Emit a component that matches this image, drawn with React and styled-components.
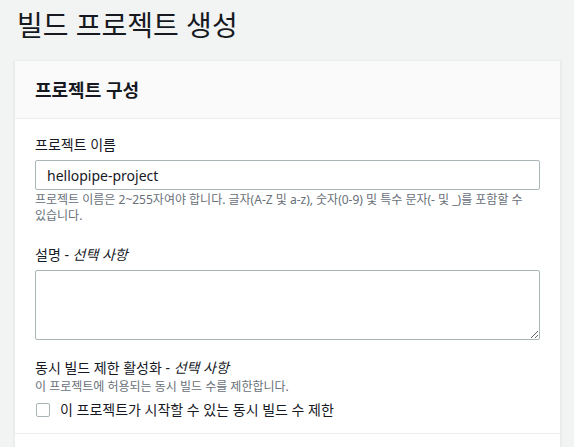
import React from "react";
import styled, { createGlobalStyle } from "styled-components";

const GlobalStyle = createGlobalStyle`
  html, body {
    margin: 0;
    padding: 0;
    background: #f2f3f3;
  }
  body {
    font-family: "Noto Sans", "Noto Sans CJK KR", sans-serif;
    color: #16191f;
  }
`;

const Page = styled.div`
  padding: 7px 13px 0 14px;
  height: 447px;
  box-sizing: border-box;
  overflow: hidden;
`;

const Title = styled.h1`
  margin: 0 0 17px 3px;
  font-size: 28px;
  line-height: 36px;
  font-weight: 400;
  color: #16191f;
`;

const Panel = styled.section`
  background: #fff;
  border: 1px solid #eaeded;
  box-shadow: 0 1px 1px 0 rgba(0, 28, 36, 0.2);
`;

const PanelHeader = styled.div`
  background: #fafafa;
  border-bottom: 1px solid #eaeded;
  height: 57px;
  padding: 0 20px;
  display: flex;
  align-items: center;
`;

const PanelTitle = styled.h2`
  margin: 0;
  font-size: 18px;
  font-weight: 700;
  line-height: 22px;
`;

const PanelBody = styled.div`
  padding: 15px 20px 11px;
  display: flex;
  flex-direction: column;
`;

const Field = styled.div`
  display: flex;
  flex-direction: column;
  margin-top: ${(p) => p.$gap || 0}px;
`;

const Label = styled.label`
  font-size: 14px;
  line-height: 22px;
  color: #16191f;

  em {
    font-style: italic;
  }
`;

const Hint = styled.div`
  font-size: 12px;
  line-height: 16px;
  color: #687078;
  margin-top: ${(p) => p.$top || 0}px;
  max-width: 495px;
`;

const Input = styled.input`
  margin-top: 4px;
  height: 30px;
  box-sizing: border-box;
  border: 1px solid #aab7b8;
  border-radius: 2px;
  padding: 0 11px;
  font-family: inherit;
  font-size: 14px;
  color: #16191f;
  background: #fff;
  outline: none;
`;

const TextArea = styled.textarea`
  margin-top: 4px;
  height: 70px;
  box-sizing: border-box;
  border: 1px solid #aab7b8;
  border-radius: 2px;
  padding: 4px 11px;
  font-family: inherit;
  font-size: 14px;
  background: #fff;
  outline: none;
  resize: vertical;
`;

const CheckRow = styled.label`
  display: flex;
  align-items: center;
  gap: 10px;
  margin-top: 3px;
  font-size: 14px;
  line-height: 24px;
  color: #16191f;
`;

const Box = styled.span`
  width: 14px;
  height: 14px;
  box-sizing: border-box;
  border: 1px solid #aab7b8;
  border-radius: 2px;
  background: #fff;
  margin-left: 1px;
`;

const Divider = styled.div`
  border-top: 1px solid #eaeded;
  height: 20px;
`;

export default function App() {
  return (
    <>
      <GlobalStyle />
      <Page>
        <Title>빌드 프로젝트 생성</Title>
        <Panel>
          <PanelHeader>
            <PanelTitle>프로젝트 구성</PanelTitle>
          </PanelHeader>
          <PanelBody>
            <Field>
              <Label>프로젝트 이름</Label>
              <Input defaultValue="hellopipe-project" />
              <Hint $top={2}>
                프로젝트 이름은 2~255자여야 합니다. 글자(A-Z 및 a-z), 숫자(0-9) 및 특수 문자(- 및 _)를 포함할 수
                있습니다.
              </Hint>
            </Field>
            <Field $gap={20}>
              <Label>
                설명 - <em>선택 사항</em>
              </Label>
              <TextArea />
            </Field>
            <Field $gap={17}>
              <Label>
                동시 빌드 제한 활성화 - <em>선택 사항</em>
              </Label>
              <Hint>이 프로젝트에 허용되는 동시 빌드 수를 제한합니다.</Hint>
              <CheckRow>
                <Box />
                이 프로젝트가 시작할 수 있는 동시 빌드 수 제한
              </CheckRow>
            </Field>
          </PanelBody>
          <Divider />
        </Panel>
      </Page>
    </>
  );
}
